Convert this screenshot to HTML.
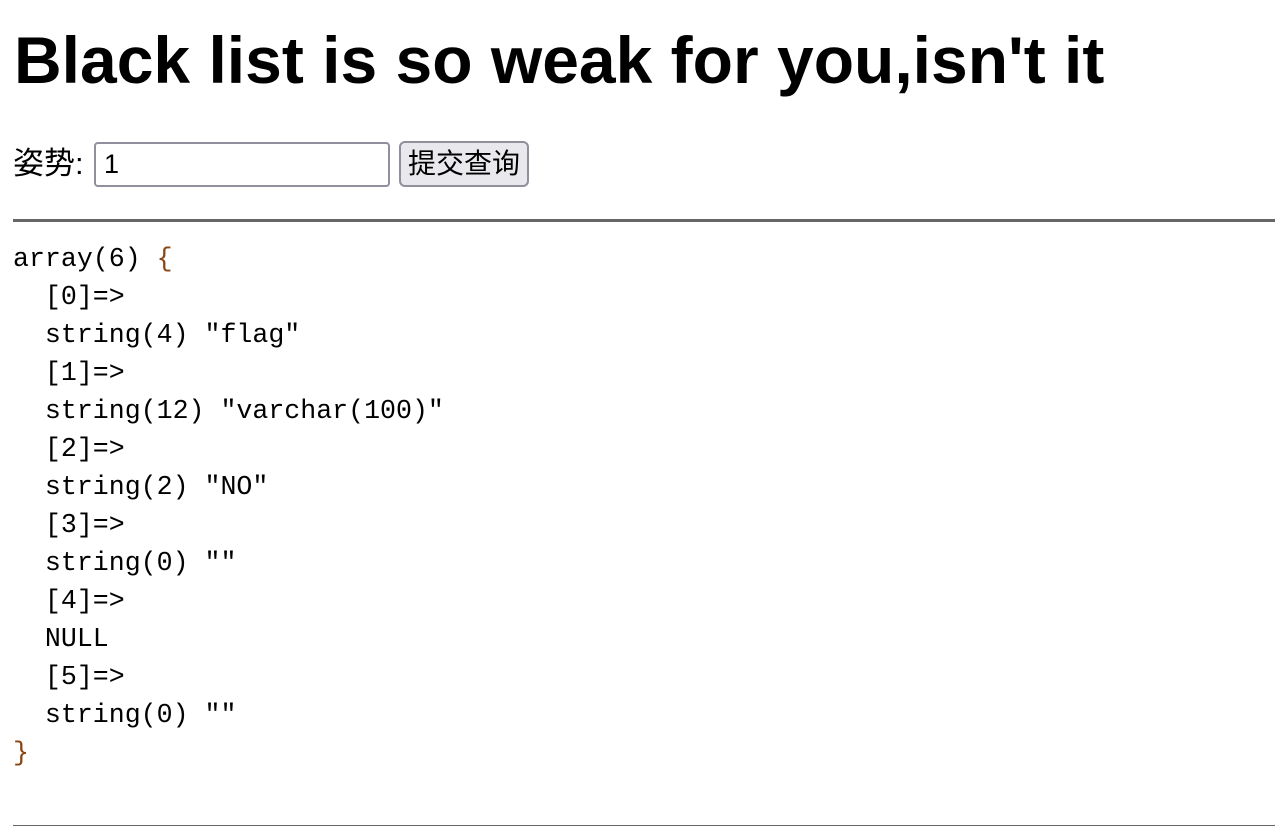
<!DOCTYPE html>
<html><head><meta charset="utf-8"><style>
body{margin:0;font-family:"Liberation Sans","Noto Sans CJK SC",sans-serif;color:#000;background:#fff}
h1{position:absolute;left:14px;top:18px;margin:0;font-size:66px;font-weight:bold;white-space:nowrap;letter-spacing:0;line-height:84px}
.lab{position:absolute;left:13px;top:143px;font-size:31px;line-height:42px}
.inp{position:absolute;left:94px;top:142px;border:2px solid #8f8f9d;border-radius:4px;box-sizing:border-box;width:296px;height:45px;font-size:27px;line-height:41px;padding-left:8px}
.btn{position:absolute;left:399px;top:141px;width:130px;height:46px;box-sizing:border-box;border:2px solid #8f8f9d;border-radius:6px;background:#e9e9ed;font-size:28px;text-align:center;line-height:42px}
.hr1{position:absolute;left:13px;top:219px;width:1262px;height:3px;background:#666}
.hr2{position:absolute;left:13px;top:825px;width:1262px;height:1px;background:#666}
pre{position:absolute;left:13px;top:240px;margin:0;font-family:"Liberation Mono",monospace;font-size:26.6px;line-height:38px;color:#000}
.b{color:#8b4513}
</style></head><body>
<h1>Black list is so weak for you,isn't it</h1>
<div class="lab">姿势:</div>
<div class="inp">1</div>
<div class="btn">提交查询</div>
<div class="hr1"></div>
<pre>array(6) <span class="b">{</span>
  [0]=&gt;
  string(4) "flag"
  [1]=&gt;
  string(12) "varchar(100)"
  [2]=&gt;
  string(2) "NO"
  [3]=&gt;
  string(0) ""
  [4]=&gt;
  NULL
  [5]=&gt;
  string(0) ""
<span class="b">}</span></pre>
<div class="hr2"></div>
</body></html>
